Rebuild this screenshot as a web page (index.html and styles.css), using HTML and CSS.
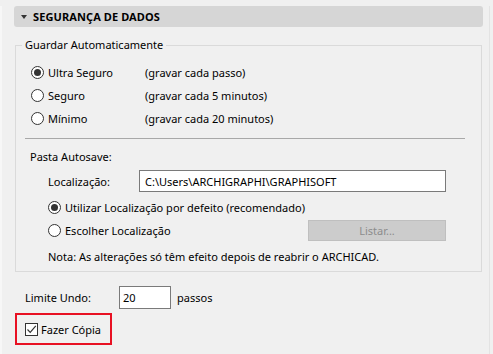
FILE: index.html
```html
<!DOCTYPE html>
<html>
<head>
<meta charset="utf-8">
<link rel="stylesheet" href="styles.css">
</head>
<body>
<div class="window">
  <div class="panel">
    <div class="header">
      <span class="caret"></span>
      <span class="title">SEGURANÇA DE DADOS</span>
    </div>
    <fieldset class="group">
      <legend>Guardar Automaticamente</legend>
      <div class="opts">
        <div class="row">
          <span class="opt"><span class="radio on"></span>Ultra Seguro</span>
          <span>(gravar cada passo)</span>
        </div>
        <div class="row">
          <span class="opt"><span class="radio"></span>Seguro</span>
          <span>(gravar cada 5 minutos)</span>
        </div>
        <div class="row">
          <span class="opt"><span class="radio"></span>Mínimo</span>
          <span>(gravar cada 20 minutos)</span>
        </div>
      </div>
      <div class="sep"></div>
      <div class="row sub-title">Pasta Autosave:</div>
      <div class="row loc">
        <span class="loc-label">Localização:</span>
        <span class="path">C:\Users\ARCHIGRAPHI\GRAPHISOFT</span>
      </div>
      <div class="row indent r1">
        <span class="radio on"></span>Utilizar Localização por defeito (recomendado)
      </div>
      <div class="row indent r2">
        <span class="opt2"><span class="radio"></span>Escolher Localização</span>
        <span class="btn">Listar...</span>
      </div>
      <div class="row indent note">Nota: As alterações só têm efeito depois de reabrir o ARCHICAD.</div>
    </fieldset>
    <div class="undo">
      <span class="undo-label">Limite Undo:</span>
      <span class="num">20</span>
      <span class="unit">passos</span>
    </div>
    <div class="copy">
      <span class="check"><svg width="11" height="11" viewBox="0 0 11 11"><polyline points="1.5,5.5 4.2,8.3 9.8,1.8" fill="none" stroke="#333" stroke-width="1.2"/></svg></span>
      <span>Fazer Cópia</span>
    </div>
  </div>
</div>
</body>
</html>
```

FILE: styles.css
```css
* { box-sizing: border-box; }
html, body {
  margin: 0;
  padding: 0;
  background: #f0f0f0;
}
body {
  font-family: "Noto Sans", "Open Sans", sans-serif;
  font-size: 11px;
  color: #000;
  width: 493px;
  height: 354px;
  overflow: hidden;
}
.window {
  height: 354px;
  border-left: 2px solid #f7f7f7;
  border-right: 1px solid #e3e3e3;
  width: 490px;
}
.panel {
  padding-left: 12px;
  width: 481px;
}
.header {
  margin-top: 6px;
  height: 21px;
  background: #d6d6d6;
  border-radius: 3px;
  display: flex;
  align-items: center;
  padding-left: 7px;
  width: 469px;
}
.caret {
  width: 0;
  height: 0;
  border-left: 3.5px solid transparent;
  border-right: 3.5px solid transparent;
  border-top: 4px solid #333;
  margin-right: 6px;
  margin-top: 1px;
}
.title {
  font-weight: bold;
  font-size: 11px;
  letter-spacing: 0.1px;
}
.group {
  margin: 10px 0 0 1px;
  width: 467px;
  border: 1px solid #dadada;
  padding: 8px 0 4px 0;
}
.group legend {
  margin-left: 6px;
  padding: 0 3px;
  line-height: 16px;
}
.row {
  display: flex;
  align-items: center;
  height: 23px;
  white-space: nowrap;
}
.opts .row {
  padding-left: 15px;
}
.opt {
  display: flex;
  align-items: center;
  width: 114px;
}
.radio {
  width: 13px;
  height: 13px;
  border: 1px solid #333;
  border-radius: 50%;
  background: #fff;
  margin-right: 4px;
  display: flex;
  align-items: center;
  justify-content: center;
  flex: none;
}
.radio.on::after {
  content: "";
  width: 7px;
  height: 7px;
  border-radius: 50%;
  background: #333;
}
.sep {
  margin: 8px 16px 0 9px;
  height: 1px;
  background: #a8a8a8;
}
.sub-title {
  margin-top: 6px;
  height: 22px;
  padding-left: 14px;
}
.loc {
  margin-top: 3px;
  height: 22px;
  padding-left: 32px;
}
.loc-label {
  width: 91px;
}
.path {
  width: 307px;
  height: 22px;
  border: 1px solid #7a7a7a;
  background: #fff;
  display: flex;
  align-items: center;
  padding-left: 5px;
}
.indent {
  padding-left: 32px;
}
.r1 {
  margin-top: 4px;
}
.r2 {
  height: 22px;
}
.opt2 {
  display: flex;
  align-items: center;
  width: 260px;
}
.btn {
  width: 138px;
  height: 21px;
  background: #cccccc;
  border: 1px solid #bfbfbf;
  color: #8c8c8c;
  display: flex;
  align-items: center;
  justify-content: center;
}
.note {
  margin-top: 4px;
  height: 22px;
}
.undo {
  margin-top: 14px;
  display: flex;
  align-items: center;
  height: 23px;
  padding-left: 11px;
}
.undo-label {
  width: 94px;
}
.num {
  width: 52px;
  height: 23px;
  background: #fff;
  border: 1px solid #7a7a7a;
  display: flex;
  align-items: center;
  padding-left: 3px;
  margin-right: 6px;
}
.copy {
  margin: 4px 0 0 1px;
  width: 97px;
  height: 32px;
  border: 2px solid #e81123;
  display: flex;
  align-items: center;
  padding-left: 8px;
}
.check {
  width: 13px;
  height: 13px;
  border: 1px solid #333;
  background: #fff;
  display: flex;
  align-items: center;
  justify-content: center;
  margin-right: 3px;
}
```
